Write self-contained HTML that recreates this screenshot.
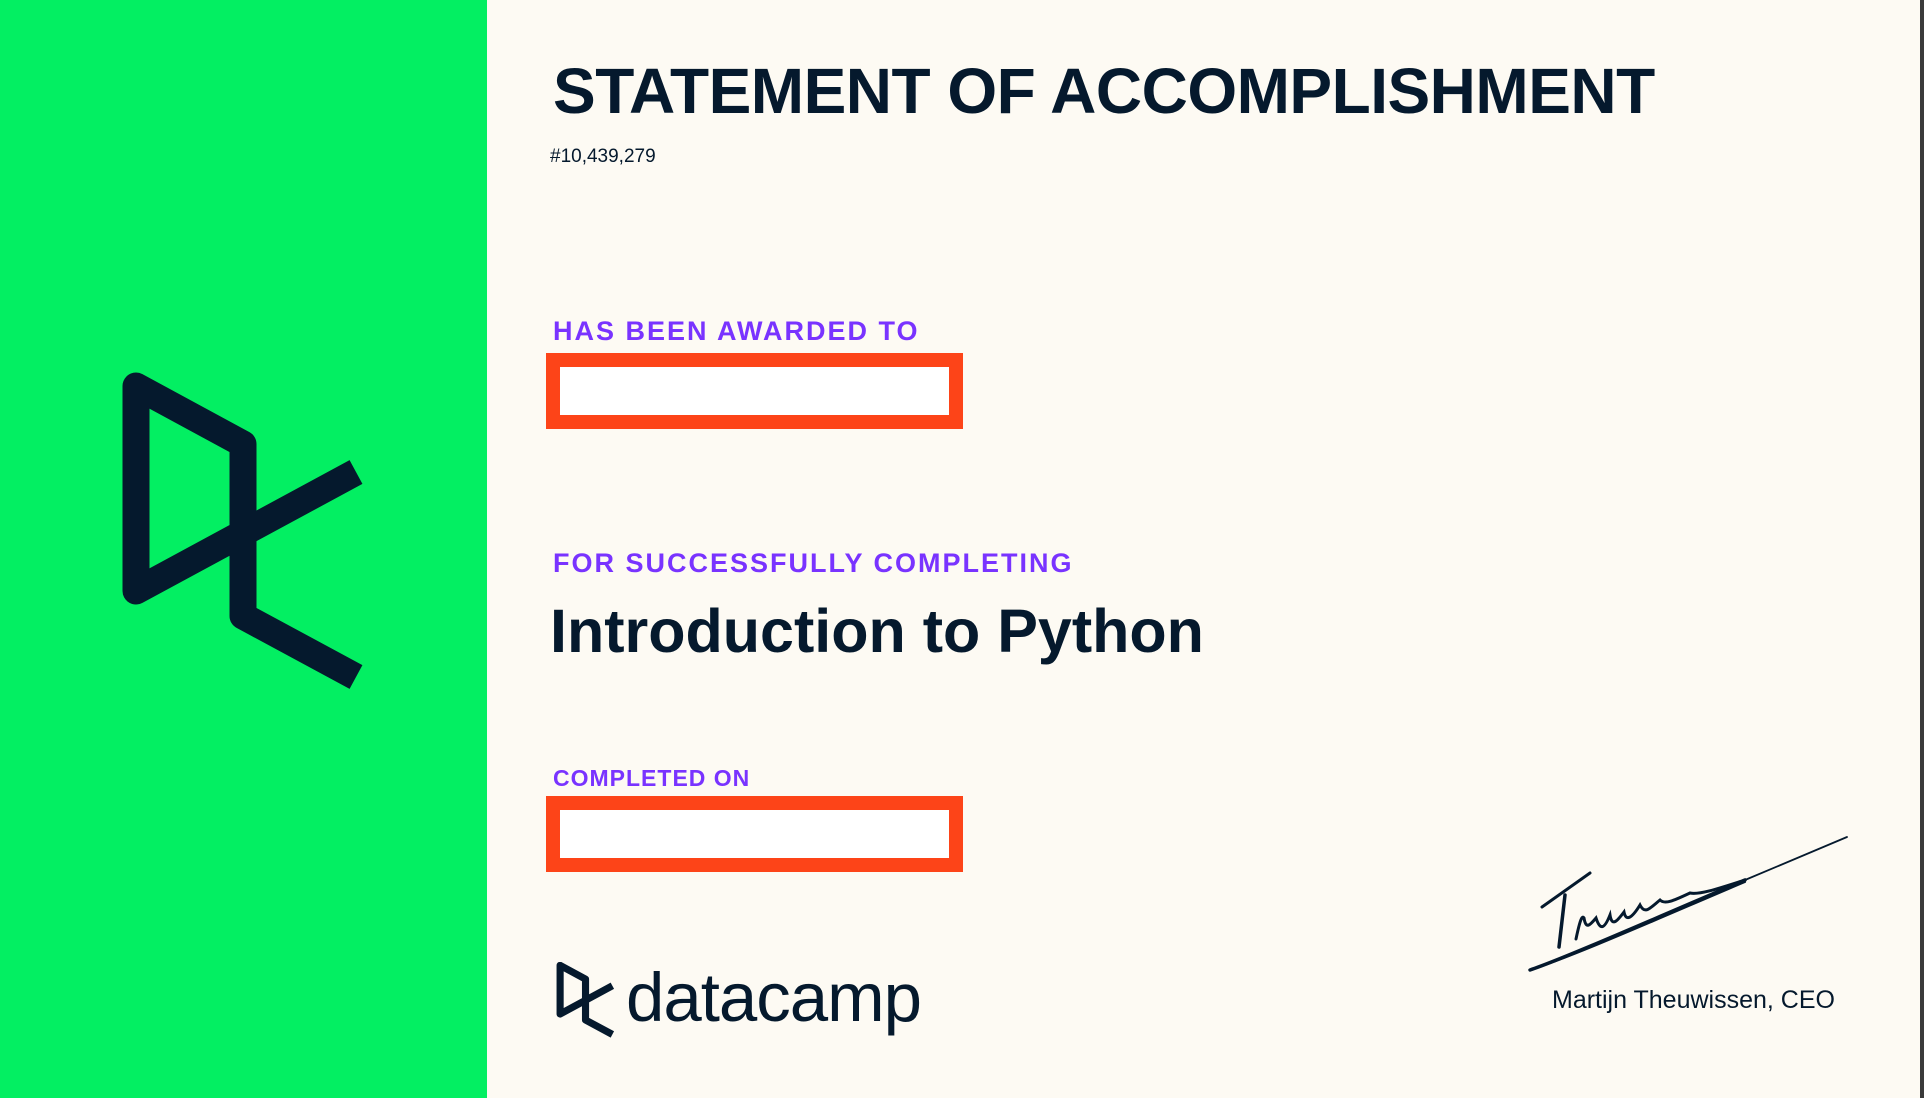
<!DOCTYPE html>
<html><head><meta charset="utf-8"><style>
*{margin:0;padding:0;box-sizing:border-box}
html,body{width:1924px;height:1098px;overflow:hidden;background:#fdfaf3;font-family:"Liberation Sans",sans-serif;color:#05192d}
.green{position:absolute;left:0;top:0;width:487px;height:1098px;background:#03ef62}
.edge{position:absolute;left:1920px;top:0;width:4px;height:1098px;background:#3a3a3a}
.t{position:absolute;white-space:nowrap}
.title{left:553px;top:54px;font-size:64px;font-weight:bold;letter-spacing:-0.5px}
.num{left:550px;top:146px;font-size:19px}
.lab{color:#7933ff;font-weight:bold;font-size:27px;letter-spacing:2px}
.box{position:absolute;left:546px;width:417px;height:76px;border:14px solid #fd4418;background:#fff}
.course{left:550px;top:596px;font-size:61px;font-weight:bold}
.ceo{left:1552px;top:986px;font-size:25px}
</style></head><body>
<div class="green"></div>
<svg style="position:absolute;left:0;top:0" width="487" height="1098">
<polyline points="356,472 136,591 136,386 243,444 243,616 356,677" fill="none" stroke="#05192d" stroke-width="27" stroke-linejoin="round"/>
</svg>
<div class="t title">STATEMENT OF ACCOMPLISHMENT</div>
<div class="t num">#10,439,279</div>
<div class="t lab" style="left:553px;top:316px">HAS BEEN AWARDED TO</div>
<div class="box" style="top:353px"></div>
<div class="t lab" style="left:553px;top:548px">FOR SUCCESSFULLY COMPLETING</div>
<div class="t course">Introduction to Python</div>
<div class="t lab" style="left:553px;top:765px;font-size:23px;letter-spacing:1px">COMPLETED ON</div>
<div class="box" style="top:796px"></div>
<svg style="position:absolute;left:556px;top:962px" width="60" height="76" viewBox="120 372 250 320">
<polyline points="356,472 136,591 136,386 243,444 243,616 356,677" fill="none" stroke="#05192d" stroke-width="30" stroke-linejoin="round"/>
</svg>
<div class="t" style="left:626px;top:958px;font-size:69px;letter-spacing:-1px">datacamp</div>
<svg style="position:absolute;left:0;top:0" width="1924" height="1098" fill="none" stroke="#05192d" stroke-linecap="round">
<path d="M1542,907 L1590,873" stroke-width="3"/>
<path d="M1565,895 L1559,947" stroke-width="3.5"/>
<path d="M1576,939 C1580,920 1582,915 1584,918 C1586,930 1590,925 1596,918 C1600,930 1604,930 1610,915 C1612,928 1618,920 1624,912 C1626,922 1632,918 1640,905 C1645,915 1650,908 1660,900 C1665,905 1675,900 1690,893 C1700,895 1720,888 1745,880" stroke-width="3"/>
<path d="M1530,970 C1560,960 1640,925 1745,880" stroke-width="3.5"/>
<path d="M1530,970 C1570,958 1660,918 1745,882" stroke-width="2"/>
<path d="M1745,880 L1847,837" stroke-width="1.8"/>
</svg>
<div class="t ceo">Martijn Theuwissen, CEO</div>
<div class="edge"></div>
</body></html>
